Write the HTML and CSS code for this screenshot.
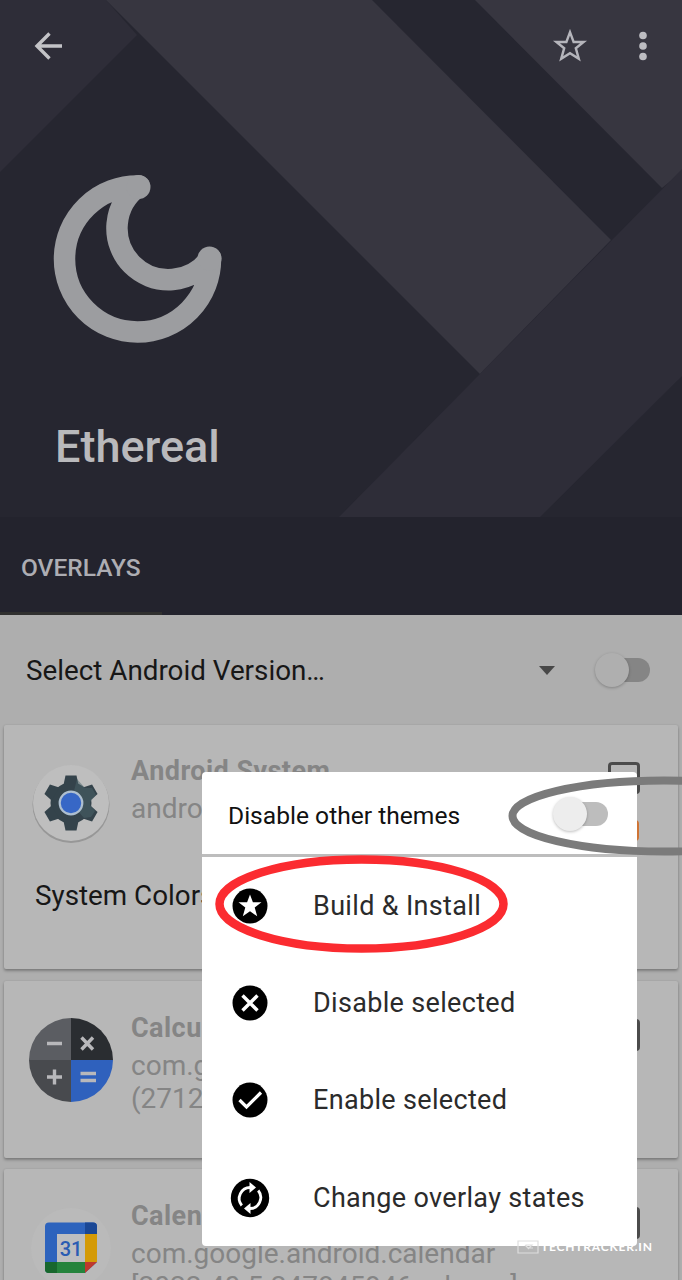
FILE: index.html
```html
<!DOCTYPE html>
<html lang="en">
<head>
<meta charset="utf-8">
<title>Ethereal</title>
<link rel="stylesheet" href="styles.css">
</head>
<body>
<div class="screen">
  <header class="hero">
    <svg class="hero-art" viewBox="0 0 682 517" aria-hidden="true">
      <path fill="#2e2d38" d="M0 0H106L137 35L0 172z"/>
      <path fill="#373640" d="M106 0H372L611 240L480 374z"/>
      <path fill="#373640" d="M475 0H682V172L662 188z"/>
      <path fill="#2e2d38" d="M682 169V376L540 517H339z"/>
    </svg>
    <div class="toolbar">
      <svg class="back" viewBox="0 0 30 30"><path d="M29 15H5M16.500 2.500L4 15L16.500 27.500" fill="none" stroke="#c3c3c7" stroke-width="3.400"/></svg>
      <svg class="fav" viewBox="0 0 36 36"><path d="M18 4.200L21.600 14H31.600L23.800 20.200L26.800 30.800L18 25.200L9.200 30.800L12.200 20.200L4.400 14H14.400z" fill="none" stroke="#b5b5bb" stroke-width="2.400"/></svg>
      <svg class="more" viewBox="0 0 10 30"><g fill="#bcbcc1"><circle cx="5" cy="4.500" r="3.800"/><circle cx="5" cy="15" r="3.800"/><circle cx="5" cy="25.500" r="3.800"/></g></svg>
    </div>
    <svg class="moon" viewBox="54 174 170 170"><path d="M139 186A73 73 0 1 0 210.500 258A51.500 51.500 0 1 1 139 186z" fill="none" stroke="#9c9da0" stroke-width="21.500" stroke-linejoin="round"/><circle cx="138.500" cy="187" r="12" fill="#9c9da0"/><circle cx="209.500" cy="258.500" r="12" fill="#9c9da0"/></svg>
    <h1 class="title">Ethereal</h1>
  </header>
  <nav class="tabs"><div class="tab">OVERLAYS</div></nav>
  <main class="content">
    <div class="version">
      <span class="version-label">Select Android Version…</span>
      <svg class="caret" viewBox="0 0 16 9"><path d="M0 0H16L8 9z" fill="#484848"/></svg>
      <div class="switch dim"><i class="knob"></i></div>
    </div>
    <section class="card first">
      <div class="card-top">
        <svg class="icon" viewBox="0 0 88 88">
          <circle cx="44" cy="45.500" r="38.500" fill="#979797"/><circle cx="44" cy="44" r="38" fill="#bebebe"/>
          <g fill="#34434b"><circle cx="44" cy="44" r="20.500"/>
          <g><path id="t" d="M38.500 16.500H49.500L51.500 26H36.500z"/><use href="#t" transform="rotate(60 44 44)"/><use href="#t" transform="rotate(120 44 44)"/><use href="#t" transform="rotate(180 44 44)"/><use href="#t" transform="rotate(240 44 44)"/><use href="#t" transform="rotate(300 44 44)"/></g></g>
          <path d="M50 20L58 29L65 29L69 36L63 43L63 46L68 52L64 58L57 59L44 44z" fill="#49646a" opacity=".5"/>
          <circle cx="44" cy="44" r="11.300" fill="#3767c6" stroke="#aebfd0" stroke-width="2.200"/>
        </svg>
        <div class="text"><div class="name">Android System</div><div class="pkg">android</div></div>
        <div class="side"><div class="check"></div><div class="chip"></div></div>
      </div>
      <div class="option">System Colors</div>
    </section>
    <section class="card second">
      <div class="card-top">
        <svg class="icon" viewBox="0 0 88 88">
          <path d="M44 44V2A42 42 0 0 0 2 44z" fill="#5b5d62"/><path d="M44 44V2A42 42 0 0 1 86 44z" fill="#2a2d31"/>
          <path d="M44 44H2A42 42 0 0 0 44 86z" fill="#484a4e"/><path d="M44 44H86A42 42 0 0 1 44 86z" fill="#2f61bd"/>
          <path d="M20 27.500H35M54.500 21.500L66 33.500M66 21.500L54.500 33.500M20 61H35M27.500 53.500V68.500M53.500 57.500H69M53.500 64.500H69" stroke="#b8b8bb" stroke-width="3.400" fill="none"/>
        </svg>
        <div class="text"><div class="name">Calculator</div><div class="pkg">com.google.android.calculator</div><div class="pkg">(271241277)</div></div>
        <div class="side"><div class="check"></div></div>
      </div>
    </section>
    <section class="card third">
      <div class="card-top">
        <svg class="icon" viewBox="0 0 88 88">
          <circle cx="44" cy="44" r="40" fill="#bababa"/>
          <path d="M22 18.500H66Q70 18.500 70 22.500V58L58 69H22Q18 69 18 65V22.500Q18 18.500 22 18.500z" fill="#2d63bd"/>
          <path d="M58 18.500H66Q70 18.500 70 22.500V30H58z" fill="#1a4795"/>
          <path d="M58 30H70V58H58z" fill="#d49a07"/>
          <path d="M18 58H58V69H22Q18 69 18 65z" fill="#24833c"/><path d="M18 58H30V69H22Q18 69 18 65z" fill="#18672d"/>
          <path d="M58 58H70L58 69z" fill="#be392d"/><path d="M30 30H58V58H30z" fill="#bdbec0"/>
          <text x="44" y="51.500" text-anchor="middle" class="day">31</text>
        </svg>
        <div class="text"><div class="name">Calendar</div><div class="pkg">com.google.android.calendar</div><div class="pkg">[2022.40.5.247845946-release]</div></div>
        <div class="side"><div class="check"></div></div>
      </div>
    </section>
  </main>

  <div class="menu">
    <div class="menu-head"><span>Disable other themes</span><div class="switch"><i class="knob"></i></div></div>
    <div class="item"><svg viewBox="0 0 40 40"><circle cx="20" cy="20" r="17.500"/><path fill="#fff" d="M20 8.500L22.900 16.200H31.500L24.700 21.500L27.200 30.300L20 25.300L12.800 30.300L15.300 21.500L8.500 16.200H17.100z"/></svg><span>Build &amp; Install</span></div>
    <div class="item"><svg viewBox="0 0 40 40"><circle cx="20" cy="20" r="17.500"/><path d="M12.500 12.500L27.500 27.500M27.500 12.500L12.500 27.500" stroke="#fff" stroke-width="3.400"/></svg><span>Disable selected</span></div>
    <div class="item"><svg viewBox="0 0 40 40"><circle cx="20" cy="20" r="17.500"/><path d="M9.500 20L16.500 27L31 12.500" fill="none" stroke="#fff" stroke-width="3.200"/></svg><span>Enable selected</span></div>
    <div class="item"><svg viewBox="0 0 40 40"><circle cx="20" cy="20" r="19.200"/><g fill="none" stroke="#fff" stroke-width="2.800"><path d="M11.800 27.500A11 11 0 0 1 20.500 9.500"/><path d="M28.200 12.500A11 11 0 0 1 19.500 30.500"/></g><path fill="#fff" d="M19.500 4L26 9.500L19.500 15zM20.500 25L14 30.500L20.500 36z"/></svg><span>Change overlay states</span></div>
  </div>

  <svg class="marks" viewBox="0 0 682 1280" aria-hidden="true">
    <ellipse cx="361.500" cy="904" rx="142" ry="44.500" fill="none" stroke="#fb2b30" stroke-width="8.500"/>
    <ellipse cx="664" cy="816" rx="151.500" ry="35.500" fill="none" stroke="#7b7b7b" stroke-width="8"/>
  </svg>
  <div class="watermark"><svg viewBox="0 0 22 14"><path d="M1 1H21V13H1zM8 5L12 9M9 5H15L12 8H16" fill="none" stroke="#dedede" stroke-width="1.200"/></svg><span>TECHTRACKER.IN</span></div>
</div>
</body>
</html>
```
FILE: styles.css
```css
* { box-sizing: border-box; }
body { margin: 0; font-family: Roboto, "Noto Sans", sans-serif; }
svg { display: block; flex: none; }
.screen { position: relative; width: 682px; height: 1280px; overflow: hidden; background: #aeaeae; display: flex; flex-direction: column; }
.hero { position: relative; height: 517px; flex: none; background: #262630; display: flex; flex-direction: column; }
.hero-art { position: absolute; inset: 0; width: 682px; height: 517px; }
.toolbar { position: relative; height: 92px; padding: 0 34px 0 33px; display: flex; align-items: center; }
.back { width: 30px; height: 30px; }
.fav { width: 36px; height: 36px; margin-left: auto; }
.more { width: 10px; height: 30px; margin-left: 50px; }
.moon { position: relative; width: 170px; height: 170px; margin: 82px 0 0 54px; overflow: visible; }
.title { position: relative; margin: 76px 0 0 55px; font-size: 45px; line-height: 54px; font-weight: 500; color: #b9b9bc; white-space: nowrap; }
.tabs { height: 98px; flex: none; background: #23232d; }
.tab { width: 162px; height: 98px; padding: 2px 0 0 21px; border-bottom: 3px solid #30302f; font-size: 24.5px; line-height: 98px; font-weight: 500; color: #adadb3; }
.content { flex: none; }
.version { height: 110px; padding: 0 32px 0 26px; display: flex; align-items: center; }
.version-label { font-size: 27.8px; color: #171717; white-space: nowrap; }
.caret { width: 16px; height: 9px; margin-left: auto; margin-right: 40px; }
.switch { position: relative; width: 55px; height: 38px; display: flex; align-items: center; }
.switch::before { content: ""; width: 42px; height: 24px; margin-left: 13px; border-radius: 12px; background: #bdbdbd; }
.knob { position: absolute; left: 0; width: 34px; height: 34px; border-radius: 50%; background: #ededed; box-shadow: 0 1px 3px rgba(0,0,0,.25); }
.dim::before { background: #858585; }
.dim .knob { background: #afafaf; }
.card { margin: 0 4px; background: #b7b7b7; border-radius: 2px; box-shadow: 0 2px 3px rgba(0,0,0,.28), 0 0 2px rgba(0,0,0,.1); }
.first { height: 244px; padding-top: 25px; }
.second { height: 177px; margin-top: 12px; padding-top: 26px; }
.third { height: 180px; margin-top: 11px; padding-top: 26px; }
.card-top { display: flex; height: 110px; }
.icon { width: 88px; height: 88px; margin: 9px 16px 0 23px; }
.text { flex: 1; min-width: 0; white-space: nowrap; color: #858585; }
.name { font-size: 27px; line-height: 42px; font-weight: 700; letter-spacing: .45px; }
.pkg { font-size: 28px; line-height: 33px; }
.side { width: 70px; display: flex; flex-direction: column; }
.check { width: 32px; height: 32px; margin-top: 12px; border: 3px solid #4b4b4b; border-radius: 4px; }
.chip { width: 31px; height: 21px; margin-top: 26px; border-radius: 4px; background: #cf7434; }
.option { padding: 18px 0 0 31px; font-size: 27.8px; line-height: 36px; color: #171717; }
.day { font: 500 20px Roboto, sans-serif; fill: #2a5cb3; }
.menu { position: absolute; left: 202px; top: 772px; width: 435px; height: 474px; background: #fff; border-radius: 4px; color: #111; }
.menu-head { height: 85px; padding: 1px 29px 0 26px; border-bottom: 3px solid #bdbdbd; display: flex; align-items: center; justify-content: space-between; font-size: 24.6px; white-space: nowrap; }
.menu-head span { padding-top: 3px; }
.item { height: 97.3px; padding-left: 28px; display: flex; align-items: center; gap: 43px; font-size: 27px; letter-spacing: .33px; color: #2b2b2b; white-space: nowrap; }
.item svg { width: 40px; height: 40px; }
.marks { position: absolute; inset: 0; width: 682px; height: 1280px; }
.watermark { position: absolute; left: 517px; top: 1239px; display: flex; align-items: center; gap: 2px; color: #fff; font: 700 12px/16px Lato, sans-serif; letter-spacing: .8px; white-space: nowrap; }
.watermark svg { width: 22px; height: 14px; }
```
